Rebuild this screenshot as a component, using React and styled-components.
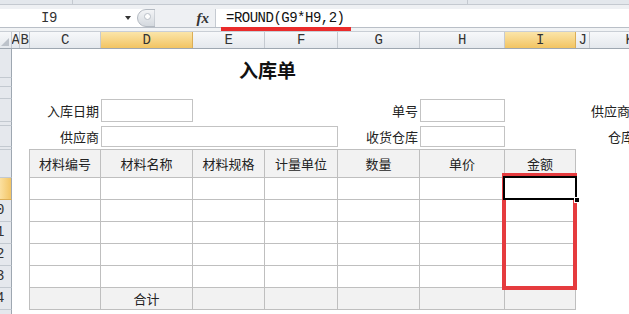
import React from 'react';
import styled, { createGlobalStyle, css } from 'styled-components';

const GlobalStyle = createGlobalStyle`
  *, *::before, *::after { box-sizing: border-box; }
  html, body { margin: 0; padding: 0; background: #fff; }
  body {
    width: 629px;
    height: 314px;
    overflow: hidden;
    font-family: "Noto Sans CJK SC", "Noto Sans", sans-serif;
    color: #222;
  }
`;

const COLS = [12, 8, 10, 71, 92, 72, 73, 82, 85, 71, 14, 80];
const ROWS = [29, 9, 12, 23, 4, 21, 3, 28, 22, 22, 22, 22, 22, 22, 22];
const LETTERS = ['', 'A', 'B', 'C', 'D', 'E', 'F', 'G', 'H', 'I', 'J', 'K'];
const ACTIVE_COLS = ['D', 'I'];
const ACTIVE_ROW = 9;

const TABLE_HEAD = ['材料编号', '材料名称', '材料规格', '计量单位', '数量', '单价', '金额'];

const mono = css`
  font-family: "Liberation Mono", "DejaVu Sans Mono", monospace;
  font-size: 14px;
  letter-spacing: -0.5px;
  color: #333;
`;

const Page = styled.div`
  position: relative;
  width: 629px;
  height: 314px;
  overflow: hidden;
`;

const TopStrip = styled.div`
  display: flex;
  height: 5px;
  background: #e3e7ec;
  border-bottom: 1px solid #c4c9d0;
`;

const StripSeg = styled.div`
  width: ${(p) => p.$w}px;
  border-right: 1px solid #c4c9d0;
`;

const FormulaBar = styled.div`
  display: flex;
  height: 23px;
  padding-top: 4px;
  background: #eef0f3;
  border-bottom: 1px solid #b9bfc7;
`;

const NameBox = styled.div`
  display: flex;
  align-items: center;
  justify-content: space-between;
  width: 137px;
  padding: 0 6px 0 41px;
  background: #fff;
  ${mono}
`;

const DropArrow = styled.span`
  width: 0;
  height: 0;
  border-left: 3px solid transparent;
  border-right: 3px solid transparent;
  border-top: 4px solid #333;
`;

const Grip = styled.div`
  display: flex;
  align-items: center;
  width: 18px;
  background: #fff;
`;

const FxZone = styled.div`
  display: flex;
  align-items: center;
  justify-content: flex-end;
  width: 60px;
  padding-right: 6px;
  font-family: "Liberation Serif", "DejaVu Serif", serif;
  font-style: italic;
  font-weight: bold;
  font-size: 15px;
  color: #333;
`;

const FormulaInput = styled.div`
  display: flex;
  align-items: center;
  flex: 1;
  padding-left: 10px;
  background: #fff;
  border-left: 1px solid #c5cad1;
  ${mono}
  color: #111;
`;

const Band = styled.div`
  height: 3px;
  background: #f1f3f5;
`;

const ColumnHeaders = styled.div`
  display: grid;
  grid-template-columns: ${COLS.map((w) => `${w}px`).join(' ')};
  height: 18px;
  border-top: 1px solid #c9ced5;
  border-bottom: 1px solid #9ea7b1;
  background: linear-gradient(#f7f8fa, #e4e8ed);
`;

const ColHead = styled.div`
  display: flex;
  align-items: center;
  justify-content: center;
  border-right: 1px solid #c5cad1;
  overflow: hidden;
  ${mono}
  ${(p) =>
    p.$active &&
    css`
      background: linear-gradient(#fbe5a9, #f2c462);
      border-right-color: #dcae56;
    `}
`;

const Corner = styled.div`
  position: relative;
  border-right: 1px solid #c5cad1;

  &::after {
    content: '';
    position: absolute;
    left: 1px;
    bottom: 2px;
    border-left: 8px solid transparent;
    border-bottom: 8px solid #bcc2ca;
  }
`;

const Sheet = styled.div`
  display: grid;
  grid-template-columns: ${COLS.map((w) => `${w}px`).join(' ')};
  grid-template-rows: ${ROWS.map((h) => `${h}px`).join(' ')};
`;

const RowHead = styled.div`
  grid-column: 1;
  grid-row: ${(p) => p.$row};
  overflow: hidden;
  background: #e5e8ed;
  border-right: 1px solid #9ea7b1;
  border-bottom: 1px solid #c3c9d0;
  ${mono}
  line-height: ${(p) => p.$h - 1}px;
  ${(p) =>
    p.$active &&
    css`
      background: linear-gradient(90deg, #fbe0a0, #f3c565);
      border-bottom-color: #dcae56;
    `}
`;

const RowNum = styled.span`
  display: block;
  width: 26px;
  margin-left: -17px;
  text-align: center;
`;

const Title = styled.div`
  grid-column: 4 / 10;
  grid-row: 1;
  padding-top: 11px;
  text-align: center;
  font-size: 19px;
  font-weight: bold;
  line-height: 20px;
  color: #111;
`;

const Label = styled.div`
  grid-column: ${(p) => p.$col};
  grid-row: ${(p) => p.$row};
  display: flex;
  align-items: center;
  justify-content: ${(p) => (p.$left ? 'flex-start' : 'flex-end')};
  padding: ${(p) => (p.$left ? `0 0 0 ${p.$left}px` : '0 2px 0 0')};
  white-space: nowrap;
  font-size: 13px;
`;

const InputBox = styled.div`
  grid-column: ${(p) => p.$col};
  grid-row: ${(p) => p.$row};
  border: 1px solid #c3c3c3;
  background: #fff;
`;

const Table = styled.div`
  grid-column: 4 / 11;
  grid-row: 8 / 15;
  margin: -1px 0 0 -1px;
  display: grid;
  grid-template-columns: 71px 92px 72px 73px 82px 85px 71px;
  grid-template-rows: 28px repeat(6, 22px);
  border-left: 1px solid #bfbfbf;
  border-top: 1px solid #bfbfbf;
`;

const TCell = styled.div`
  position: relative;
  display: flex;
  align-items: center;
  justify-content: center;
  border-right: 1px solid #bfbfbf;
  border-bottom: 1px solid #bfbfbf;
  background: ${(p) => (p.$shade ? '#f2f2f2' : '#fff')};
  font-size: 13px;
  color: #222;
  ${(p) =>
    p.$active &&
    css`
      z-index: 1;
      &::before {
        content: '';
        position: absolute;
        inset: -2px -2px -1px -2px;
        border: 2px solid #000;
      }
      &::after {
        content: '';
        position: absolute;
        right: -5px;
        bottom: -4px;
        width: 6px;
        height: 6px;
        background: #000;
        border: 1px solid #fff;
      }
    `}
`;

const Underline = styled.div`
  position: absolute;
  left: 221px;
  top: 27px;
  width: 130px;
  height: 4px;
  background: #ea2b2b;
`;

const Annotation = styled.div`
  position: absolute;
  left: 502px;
  top: 173px;
  width: 75px;
  height: 117px;
  border: 4px solid #e53b3e;
`;

function GripIcon() {
  return (
    <svg width="18" height="18" viewBox="0 0 18 18">
      <defs>
        <linearGradient id="gripFill" x1="0" y1="0" x2="0" y2="1">
          <stop offset="0" stopColor="#f4f5f7" />
          <stop offset="1" stopColor="#d3d8de" />
        </linearGradient>
      </defs>
      <path d="M18 0.5 H9 A8.5 8.5 0 0 0 9 17.5 H18 Z" fill="url(#gripFill)" stroke="#b3b9c1" />
      <circle cx="10.5" cy="7.5" r="3" fill="#fdfdfd" stroke="#b9bfc7" />
    </svg>
  );
}

export default function App() {
  const tableRows = [TABLE_HEAD, ...Array(5).fill([]), ['', '合计']];
  return (
    <Page>
      <GlobalStyle />
      <TopStrip>
        <StripSeg $w={73} />
        <StripSeg $w={395} />
      </TopStrip>
      <FormulaBar>
        <NameBox>
          I9
          <DropArrow />
        </NameBox>
        <Grip>
          <GripIcon />
        </Grip>
        <FxZone>fx</FxZone>
        <FormulaInput>=ROUND(G9*H9,2)</FormulaInput>
      </FormulaBar>
      <Band />
      <ColumnHeaders>
        <Corner />
        {LETTERS.slice(1).map((l) => (
          <ColHead key={l} $active={ACTIVE_COLS.includes(l)}>
            {l}
          </ColHead>
        ))}
      </ColumnHeaders>
      <Sheet>
        {ROWS.map((h, i) => (
          <RowHead key={i} $row={i + 1} $h={h} $active={i + 1 === ACTIVE_ROW}>
            {i + 1 >= 10 && <RowNum>{i + 1}</RowNum>}
          </RowHead>
        ))}

        <Title>入库单</Title>

        <Label $col={4} $row={4}>入库日期</Label>
        <InputBox $col={5} $row={4} />
        <Label $col={8} $row={4}>单号</Label>
        <InputBox $col={9} $row={4} />
        <Label $col={12} $row={4} $left={1}>供应商</Label>

        <Label $col={4} $row={6}>供应商</Label>
        <InputBox $col="5 / 8" $row={6} />
        <Label $col={8} $row={6}>收货仓库</Label>
        <InputBox $col={9} $row={6} />
        <Label $col={12} $row={6} $left={18}>仓库</Label>

        <Table>
          {tableRows.map((row, r) =>
            TABLE_HEAD.map((_, c) => (
              <TCell
                key={`${r}-${c}`}
                $shade={r === 0 || r === 6}
                $active={r === 1 && c === 6}
              >
                {row[c] || ''}
              </TCell>
            )),
          )}
        </Table>
      </Sheet>
      <Underline />
      <Annotation />
    </Page>
  );
}
